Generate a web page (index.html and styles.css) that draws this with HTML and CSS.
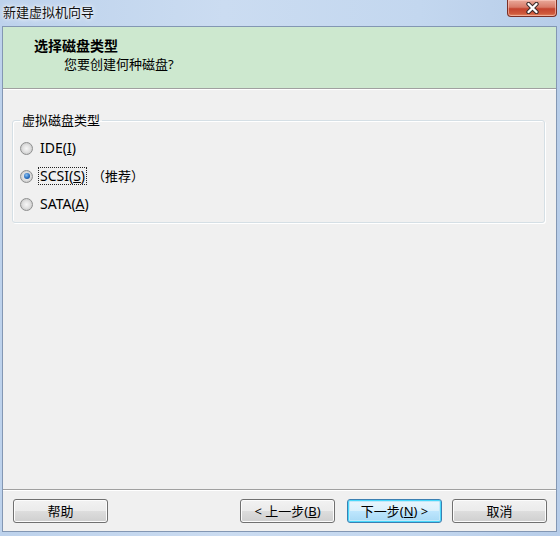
FILE: index.html
```html
<!DOCTYPE html>
<html lang="zh-CN">
<head>
<meta charset="utf-8">
<title>新建虚拟机向导</title>
<link rel="stylesheet" href="styles.css">
</head>
<body>
<div class="window">
  <div class="titlebar">
    <span class="title">新建虚拟机向导</span>
    <div class="close">
      <svg width="15" height="12" viewBox="0 0 15 12">
        <path d="M3.5 2 L11.5 10 M11.5 2 L3.5 10" stroke="#3a2a2a" stroke-width="4.4" stroke-linecap="round"/>
        <path d="M3.5 2 L11.5 10 M11.5 2 L3.5 10" stroke="#ffffff" stroke-width="2.4" stroke-linecap="round"/>
      </svg>
    </div>
  </div>
  <div class="client">
    <div class="header">
      <div class="h-title">选择磁盘类型</div>
      <div class="h-sub">您要创建何种磁盘?</div>
    </div>
    <div class="content">
      <fieldset class="group">
        <legend>虚拟磁盘类型</legend>
        <div class="row">
          <span class="radio"></span>
          <span class="label">IDE(<u>I</u>)</span>
        </div>
        <div class="row">
          <span class="radio checked"></span>
          <span class="label focus">SCSI(<u>S</u>)</span>
          <span class="note">（推荐）</span>
        </div>
        <div class="row">
          <span class="radio"></span>
          <span class="label">SATA(<u>A</u>)</span>
        </div>
      </fieldset>
    </div>
    <div class="footer">
      <button class="btn help">帮助</button>
      <div class="spacer"></div>
      <button class="btn back">&lt; 上一步(<u>B</u>)</button>
      <button class="btn next default">下一步(<u>N</u>) &gt;</button>
      <button class="btn cancel">取消</button>
    </div>
  </div>
</div>
</body>
</html>
```
FILE: styles.css
```css
html, body {
  margin: 0;
  padding: 0;
}
body {
  width: 560px;
  height: 536px;
  overflow: hidden;
  font-family: "Noto Sans", "Noto Sans CJK SC", sans-serif;
  font-size: 13px;
  color: #000;
}
.window {
  width: 560px;
  height: 536px;
  display: flex;
  flex-direction: column;
  background: linear-gradient(90deg, #bdd2ec 0%, #cbdcf1 40%, #c3d7ef 75%, #b7cde9 100%);
}
.titlebar {
  height: 26px;
  display: flex;
  align-items: flex-start;
  flex: none;
}
.title {
  margin: 4px 0 0 3px;
  line-height: 17px;
  font-size: 13px;
  color: #111;
  text-shadow: 0 0 6px #ffffff, 0 0 3px #ffffff;
}
.close {
  margin-left: auto;
  margin-right: 3px;
  width: 50px;
  height: 17px;
  box-sizing: border-box;
  border: 1px solid #7a2f25;
  border-top: none;
  border-radius: 0 0 4px 4px;
  background: linear-gradient(180deg, #e9a99a 0%, #d87a68 45%, #c4432f 55%, #cf5a3c 85%, #e48a64 100%);
  box-shadow: inset 0 0 0 1px rgba(255, 210, 200, 0.55);
  display: flex;
  align-items: center;
  justify-content: center;
}
.close svg {
  display: block;
}
.client {
  flex: 1;
  margin: 0 3px 4px 2px;
  border: 1px solid #8397b3;
  background: #f0f0f0;
  display: flex;
  flex-direction: column;
  min-height: 0;
}
.header {
  height: 62px;
  box-sizing: border-box;
  background: #cde8cf;
  border-bottom: 1px solid #a0a0a0;
  padding: 10px 0 0 31px;
  flex: none;
}
.h-title {
  font-weight: bold;
  font-size: 14px;
  line-height: 18px;
}
.h-sub {
  margin-left: 30px;
  line-height: 18px;
  font-size: 13px;
}
.content {
  flex: 1;
  padding: 22px 11px 0 9px;
  border-top: 1px solid #ffffff;
}
.group {
  margin: 0;
  padding: 6px 7px 4px 7px;
  border: 1px solid #d5dfe5;
  border-radius: 3px;
  box-shadow: inset 1px 1px 0 #ffffff, 1px 1px 0 #ffffff;
}
.group legend {
  padding: 0 2px;
  line-height: 16px;
  font-size: 13px;
}
.row {
  height: 28px;
  display: flex;
  align-items: center;
}
.radio {
  width: 13px;
  height: 13px;
  box-sizing: border-box;
  border-radius: 50%;
  border: 1px solid #8e8f8f;
  background: radial-gradient(circle at 50% 50%, #f6f6f6 0%, #e2e2e2 45%, #d0d0d0 70%, #f4f4f4 100%);
  display: flex;
  align-items: center;
  justify-content: center;
  flex: none;
}
.radio.checked::after {
  content: "";
  width: 6px;
  height: 6px;
  border-radius: 50%;
  background: radial-gradient(circle at 40% 35%, #8cc3f3 0%, #2a6fc0 55%, #11407e 100%);
}
.label {
  margin-left: 5px;
  line-height: 16px;
  font-size: 14px;
  padding: 0 1px;
  border: 1px solid transparent;
}
.label.focus {
  border: 1px dotted #222;
}
.note {
  margin-left: 5px;
  line-height: 16px;
}
.footer {
  flex: none;
  height: 42px;
  box-sizing: border-box;
  border-top: 1px solid #a0a0a0;
  box-shadow: inset 0 1px 0 #ffffff;
  display: flex;
  align-items: flex-start;
  padding: 9px 9px 0 10px;
}
.spacer {
  flex: 1;
}
.btn {
  width: 95px;
  height: 24px;
  box-sizing: border-box;
  border: 1px solid #707070;
  border-radius: 3px;
  background: linear-gradient(180deg, #f2f2f2 0%, #ebebeb 49%, #dddddd 51%, #cfcfcf 100%);
  box-shadow: inset 0 0 0 1px #fcfcfc;
  font-family: "Noto Sans", "Noto Sans CJK SC", sans-serif;
  font-size: 13px;
  line-height: 20px;
  color: #000;
  padding: 0;
  margin: 0;
}
.btn.next {
  margin-left: 12px;
  border-color: #3c7fb1;
  box-shadow: inset 0 0 0 1px #48d8fb, inset 0 0 0 2px #c2e8f8;
  background: linear-gradient(180deg, #eaf6fd 0%, #d9f0fc 49%, #bee6fd 51%, #a7d9f5 100%);
}
.btn.cancel {
  margin-left: 10px;
}
```
